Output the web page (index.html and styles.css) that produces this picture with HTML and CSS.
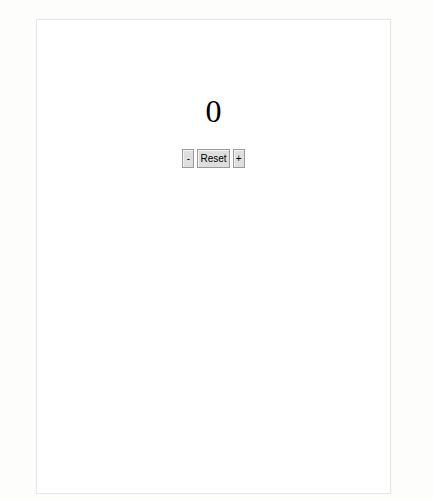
FILE: index.html
```html
<!DOCTYPE html>
<html>
<head>
<meta charset="utf-8">
<link rel="stylesheet" href="styles.css">
</head>
<body>
<div class="card">
  <h1 class="count">0</h1>
  <div class="controls">
    <button class="btn">-</button>
    <button class="btn">Reset</button>
    <button class="btn">+</button>
  </div>
</div>
</body>
</html>
```
FILE: styles.css
```css
html, body {
  margin: 0;
  padding: 0;
  background: #fdfdfb;
}
body {
  padding: 19px 0 0 36px;
  font-family: "Liberation Serif", serif;
}
.card {
  width: 353px;
  height: 473px;
  background: #fff;
  border: 1px solid #e6e6e6;
  box-shadow: 0 0 3px rgba(0,0,0,0.04);
  display: flex;
  flex-direction: column;
  align-items: center;
}
.count {
  margin: 73px 0 0;
  font-size: 32px;
  font-weight: normal;
  line-height: 37px;
  color: #000;
}
.controls {
  margin-top: 19px;
  display: flex;
  gap: 3px;
}
.btn {
  font-family: "Liberation Sans", Arial, sans-serif;
  font-size: 10px;
  height: 19px;
  min-width: 12px;
  padding: 0 2px;
  background: #dedede;
  border: 1px solid #9a9a9a;
  border-radius: 0;
  color: #000;
  box-shadow: inset 1px 1px 0 #f2f2f2;
}
```
